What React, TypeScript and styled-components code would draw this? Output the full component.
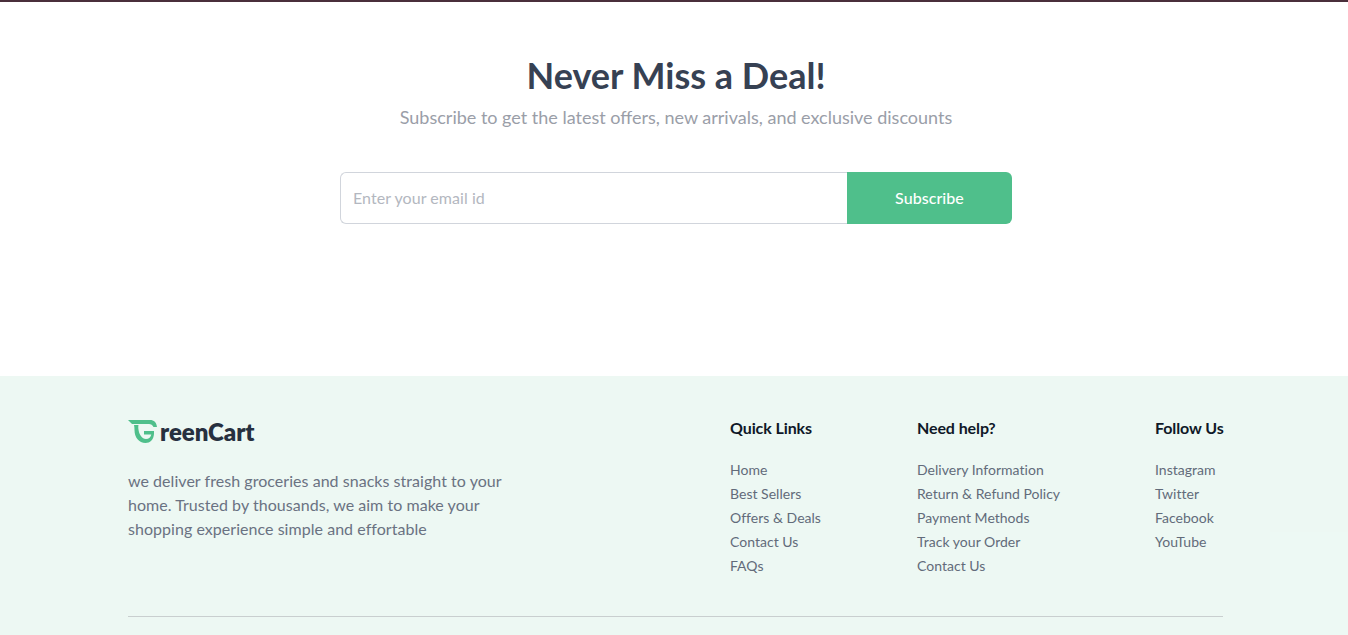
import React from "react";
import styled, { createGlobalStyle } from "styled-components";

const Global = createGlobalStyle`
  html, body { margin: 0; padding: 0; height: 635px; overflow: hidden; background: #fff; }
  body { font-family: "Lato", "Inter", "Liberation Sans", sans-serif; }
  * { box-sizing: border-box; }
`;

const Page = styled.div`
  position: relative;
  height: 635px;
  overflow: hidden;
  display: flex;
  flex-direction: column;
`;

const TopLine = styled.div`
  height: 2px;
  background: #4a2f3b;
`;

const Newsletter = styled.section`
  height: 374px;
  padding: 50px 0 0 4px;
  display: flex;
  flex-direction: column;
  align-items: center;
`;

const Title = styled.h1`
  margin: 0;
  font-size: 36px;
  line-height: 46px;
  font-weight: 700;
  color: #364153;
`;

const Subtitle = styled.p`
  margin: 5px 0 0;
  font-size: 18px;
  line-height: 28px;
  color: #9a9ea8;
`;

const Form = styled.form`
  margin-top: 41px;
  width: 672px;
  height: 52px;
  display: flex;
`;

const EmailInput = styled.input`
  flex: 1;
  min-width: 0;
  height: 100%;
  padding: 0 12px 2px;
  border: 1px solid #d1d5dc;
  border-right: none;
  border-radius: 6px 0 0 6px;
  font: 400 16px "Lato", sans-serif;
  letter-spacing: 0.05px;
  color: #364153;
  outline: none;
  &::placeholder { color: #b3b7c0; opacity: 1; }
`;

const SubmitButton = styled.button`
  width: 165px;
  height: 100%;
  padding: 0 0 2px;
  border: none;
  border-radius: 0 6px 6px 0;
  background: #4fbf8b;
  color: #fff;
  font: 500 16px "Lato", sans-serif;
  letter-spacing: 0.05px;
`;

const Footer = styled.footer`
  flex: 1;
  background: #edf8f3;
  padding: 40px 125px 0 128px;
`;

const FooterTop = styled.div`
  height: 201px;
  display: flex;
  justify-content: space-between;
  align-items: flex-start;
  border-bottom: 1px solid #c9cfcf;
`;

const Brand = styled.div`
  width: 410px;
`;

const Logo = styled.div`
  height: 30px;
  display: flex;
  align-items: center;
  font-size: 24px;
  font-weight: 800;
  color: #27303f;
  letter-spacing: -0.05px;
  svg { margin: 0 2px 0 0; flex: none; }
`;

const Description = styled.p`
  margin: 23px 0 0;
  font-size: 16px;
  line-height: 24px;
  color: #6a7282;
  letter-spacing: 0.04px;
`;

const Columns = styled.div`
  display: flex;
  align-items: flex-start;
`;

const Column = styled.div<{ $width: number }>`
  width: ${(p) => p.$width}px;
`;

const ColumnTitle = styled.h3`
  margin: 0 0 18px;
  font-size: 16px;
  line-height: 24px;
  font-weight: 700;
  color: #101828;
  letter-spacing: -0.1px;
  white-space: nowrap;
`;

const LinkList = styled.ul`
  margin: 0;
  padding: 0;
  list-style: none;
`;

const LinkItem = styled.li`
  font-size: 14px;
  line-height: 24px;
  color: #626b7a;
  letter-spacing: 0.02px;
  white-space: nowrap;
`;

const Glow = styled.div`
  position: absolute;
  right: 0;
  bottom: 0;
  width: 78px;
  height: 103px;
  background: #edf9f4;
  pointer-events: none;
`;

const columns = [
  { title: "Quick Links", width: 187, links: ["Home", "Best Sellers", "Offers & Deals", "Contact Us", "FAQs"] },
  { title: "Need help?", width: 238, links: ["Delivery Information", "Return & Refund Policy", "Payment Methods", "Track your Order", "Contact Us"] },
  { title: "Follow Us", width: 68, links: ["Instagram", "Twitter", "Facebook", "YouTube"] },
];

export default function App() {
  return (
    <Page>
      <Global />
      <TopLine />
      <Newsletter>
        <Title>Never Miss a Deal!</Title>
        <Subtitle>Subscribe to get the latest offers, new arrivals, and exclusive discounts</Subtitle>
        <Form onSubmit={(e) => e.preventDefault()}>
          <EmailInput type="text" placeholder="Enter your email id" />
          <SubmitButton type="submit">Subscribe</SubmitButton>
        </Form>
      </Newsletter>
      <Footer>
        <FooterTop>
          <Brand>
            <Logo>
              <svg width="30" height="28" viewBox="0 0 30 28" fill="none" aria-hidden="true">
                <path d="M0 3H22C26 3 28.500 5.500 29 10H25.500C24.500 8 23 7 21 7H4Z" fill="#4fbf8b" />
                <path d="M6 8H10.500C10.300 9 10.200 10.500 10.400 12C11 17.500 14 22 18 22C21 22 22.800 20 23.300 17.500H16V14H26V17C25.500 23 22 26 17.500 26C11 26 6.500 20.500 6.500 13C6.500 11 6.300 9.500 6 8Z" fill="#4fbf8b" />
              </svg>
              reenCart
            </Logo>
            <Description>
              we deliver fresh groceries and snacks straight to your home. Trusted by thousands, we aim to make your shopping experience simple and effortable
            </Description>
          </Brand>
          <Columns>
            {columns.map((c) => (
              <Column key={c.title} $width={c.width}>
                <ColumnTitle>{c.title}</ColumnTitle>
                <LinkList>
                  {c.links.map((l) => (
                    <LinkItem key={l}>{l}</LinkItem>
                  ))}
                </LinkList>
              </Column>
            ))}
          </Columns>
        </FooterTop>
      </Footer>
      <Glow />
    </Page>
  );
}
